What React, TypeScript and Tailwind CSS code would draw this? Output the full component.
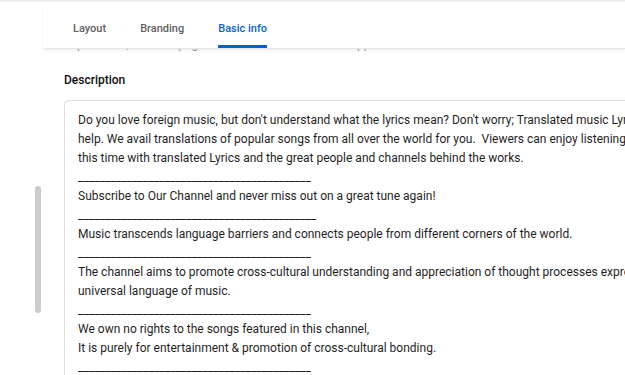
const tabs = ["Layout", "Branding", "Basic info"]

const lines = [
  "Do you love foreign music, but don't understand what the lyrics mean? Don't worry; Translated music Lyrics is here to",
  "help. We avail translations of popular songs from all over the world for you.  Viewers can enjoy listening to music",
  "this time with translated Lyrics and the great people and channels behind the works.",
  "_".repeat(43),
  "Subscribe to Our Channel and never miss out on a great tune again!",
  "_".repeat(44),
  "Music transcends language barriers and connects people from different corners of the world.",
  "_".repeat(43),
  "The channel aims to promote cross-cultural understanding and appreciation of thought processes expressed through the",
  "universal language of music.",
  "_".repeat(43),
  "We own no rights to the songs featured in this channel,",
  "It is purely for entertainment & promotion of cross-cultural bonding.",
  "_".repeat(43),
]

export default function App() {
  return (
    <div className="w-[625px] h-[375px] overflow-hidden bg-white font-['Roboto',sans-serif] flex flex-col">
      <div className="h-[2px] shrink-0 bg-gradient-to-b from-[#ebebeb] to-[#f6f6f6]" />
      <div className="flex flex-1 min-h-0">
        {/* left gutter with scrollbar */}
        <div className="w-[44px] shrink-0 pl-[35px] pt-[184px]">
          <div className="w-[6px] h-[127px] rounded-full bg-[#cccccc]" />
        </div>

        <div className="flex-1 min-w-0 flex flex-col">
          <div className="relative z-10 h-[47px] shrink-0 bg-white border-b border-[#e6e6e6] shadow-[0_2px_3px_rgba(0,0,0,0.06)] flex items-end pl-[29px] gap-[34px]">
            {tabs.map((t) => {
              const active = t === "Basic info"
              return (
                <div key={t} className="flex flex-col items-stretch">
                  <span
                    className={
                      active
                        ? "text-[11px] leading-[16px] font-medium text-[#065fd4]"
                        : "text-[11px] leading-[16px] font-medium text-[#606060]"
                    }
                  >
                    {t}
                  </span>
                  <div className={active ? "mt-[8px] h-[3px] bg-[#065fd4]" : "mt-[8px] h-[3px]"} />
                </div>
              )
            })}
          </div>

          {/* content scrolled under the tab bar */}
          <div className="-mt-[13px] pl-[20px] text-[12px] leading-[16px] text-[#9a9a9a] whitespace-pre">
            Tap to edits, then the page and all the details will also appear
          </div>

          <div className="pl-[20px] pt-[20px]">
            <div className="text-[12px] leading-[16px] font-medium text-[#0d0d0d]">Description</div>
            <div className="mt-[12px] w-[800px] rounded-[4px] border border-[#dddddd] pl-[13px] pt-[10px] pb-[10px]">
              {lines.map((l, i) => (
                <div key={i} className="text-[12px] leading-[19px] text-[#1f1f1f] whitespace-pre">
                  {l}
                </div>
              ))}
            </div>
          </div>
        </div>
      </div>
    </div>
  )
}
